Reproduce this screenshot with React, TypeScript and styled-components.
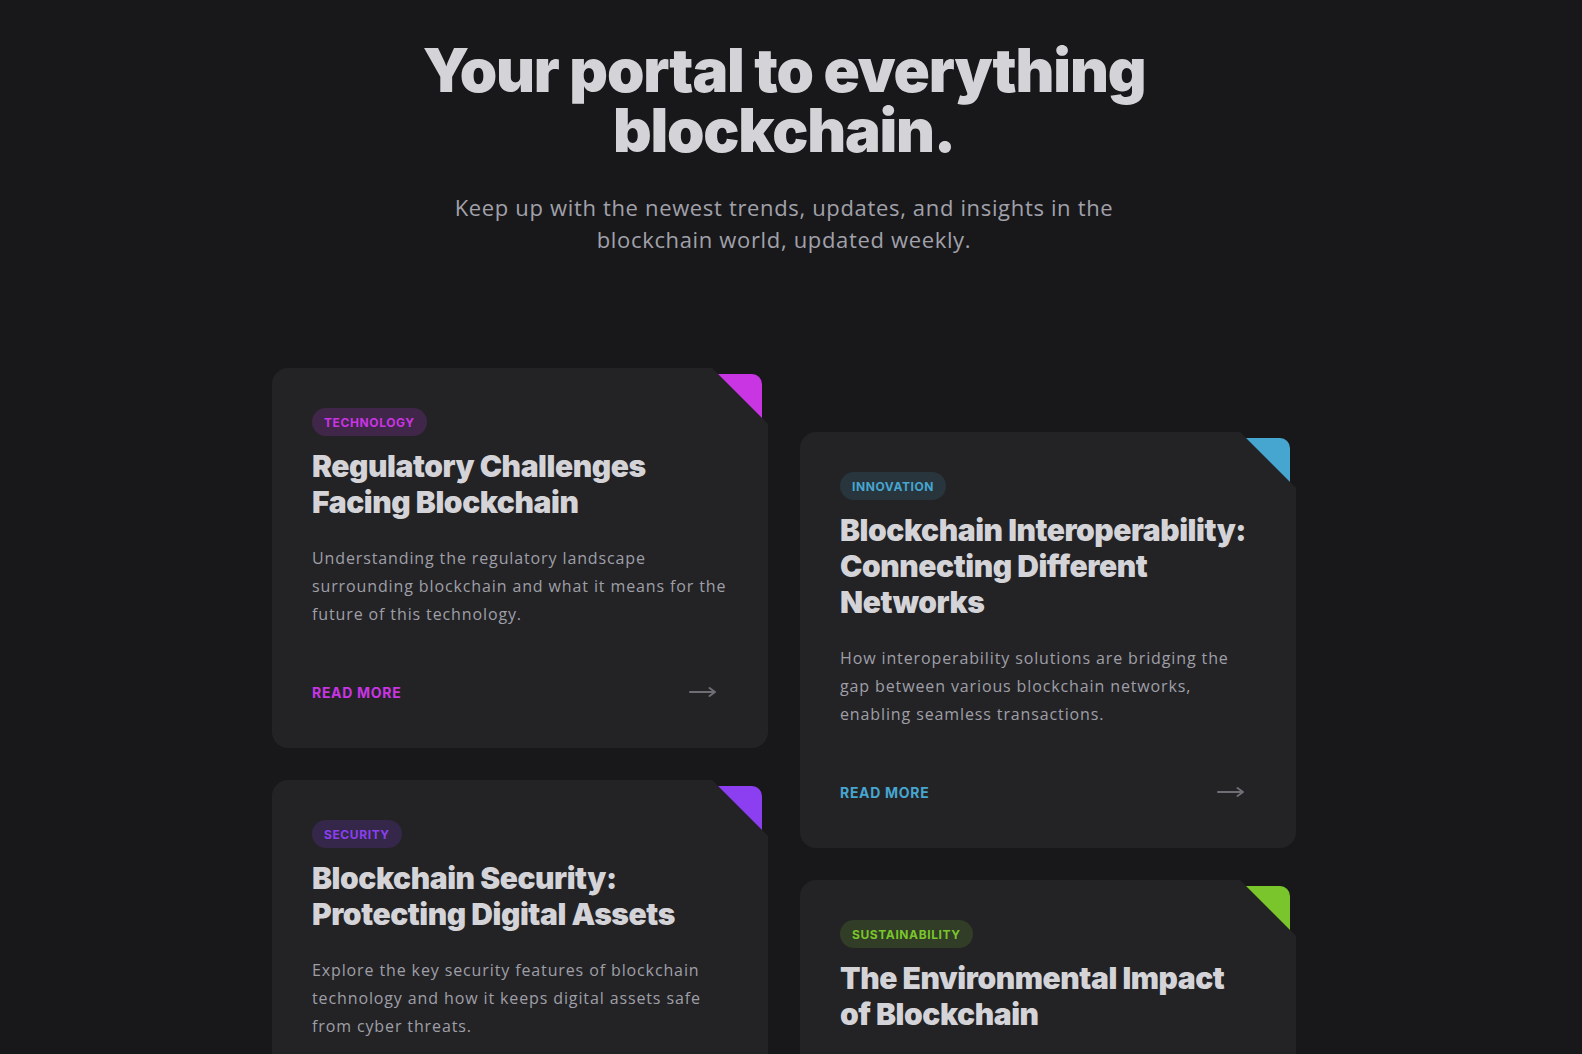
import React from "react";
import styled, { createGlobalStyle } from "styled-components";

const GlobalStyle = createGlobalStyle`
    html, body {
        margin: 0;
        padding: 0;
        background: #18181b;
    }
    * {
        box-sizing: border-box;
    }
`;

const Page = styled.main`
    min-height: 100vh;
    padding: 40px 14px 80px 0;
    display: flex;
    flex-direction: column;
    align-items: center;
`;

const Hero = styled.header`
    display: flex;
    flex-direction: column;
    align-items: center;
    text-align: center;
`;

const Title = styled.h1`
    margin: 0;
    max-width: 760px;
    font-family: Inter, "Liberation Sans", sans-serif;
    font-weight: 900;
    font-size: 60px;
    line-height: 60px;
    letter-spacing: -0.02em;
    color: #d4d4d8;
`;

const Subtitle = styled.p`
    margin: 31px 0 0;
    max-width: 700px;
    font-family: "Open Sans", "Liberation Sans", sans-serif;
    font-size: 22px;
    line-height: 32px;
    letter-spacing: 0.03em;
    color: #a1a1aa;
`;

const Grid = styled.section`
    margin-top: 113px;
    display: grid;
    grid-template-columns: 496px 496px;
    gap: 32px;
    align-items: start;
`;

type ColumnProps = {
    readonly offset?: boolean;
};

const Column = styled.div<ColumnProps>`
    display: flex;
    flex-direction: column;
    gap: 32px;
    padding-top: ${(props) => (props.offset ? "64px" : "0")};
`;

const CardWrap = styled.article`
    position: relative;
`;

const Card = styled.div`
    display: flex;
    flex-direction: column;
    padding: 40px 40px 43px;
    background: #232326;
    border-radius: 16px;
    clip-path: polygon(0 0, calc(100% - 56px) 0, 100% 56px, 100% 100%, 0 100%);
`;

type AccentProps = {
    readonly accent: string;
};

const Corner = styled.span<AccentProps>`
    position: absolute;
    top: 6px;
    right: 6px;
    width: 44px;
    height: 44px;
    background: ${(props) => props.accent};
    border-top-right-radius: 10px;
    clip-path: polygon(0 0, 100% 0, 100% 100%);
`;

const Tag = styled.span<AccentProps & { readonly tint: string }>`
    align-self: flex-start;
    height: 28px;
    padding: 0 12px;
    display: inline-flex;
    align-items: center;
    border-radius: 14px;
    background: ${(props) => props.tint};
    color: ${(props) => props.accent};
    font-family: Inter, "Liberation Sans", sans-serif;
    font-weight: 700;
    font-size: 12px;
    letter-spacing: 0.05em;
    text-transform: uppercase;
`;

const Heading = styled.h2`
    margin: 12px 0 0;
    font-family: Inter, "Liberation Sans", sans-serif;
    font-weight: 900;
    font-size: 30px;
    line-height: 36px;
    letter-spacing: -0.015em;
    color: #d4d4d8;
`;

const Description = styled.p`
    margin: 24px 0 0;
    font-family: "Open Sans", "Liberation Sans", sans-serif;
    font-size: 16px;
    line-height: 28px;
    letter-spacing: 0.055em;
    color: #9f9fa7;
`;

const Footer = styled.div`
    margin-top: 51px;
    height: 26px;
    padding-right: 11px;
    display: flex;
    align-items: center;
    justify-content: space-between;
`;

const ReadMore = styled.a<AccentProps>`
    font-family: Inter, "Liberation Sans", sans-serif;
    font-weight: 700;
    font-size: 14px;
    letter-spacing: 0.05em;
    text-transform: uppercase;
    text-decoration: none;
    color: ${(props) => props.accent};
`;

const Arrow = styled.svg`
    width: 28px;
    height: 14px;
    color: #6e6e75;
`;

type Post = {
    tag: string;
    accent: string;
    tint: string;
    title: string;
    text: string;
};

const left: Post[] = [
    {
        tag: "Technology",
        accent: "#c935e3",
        tint: "rgba(201, 53, 227, 0.18)",
        title: "Regulatory Challenges Facing Blockchain",
        text: "Understanding the regulatory landscape surrounding blockchain and what it means for the future of this technology.",
    },
    {
        tag: "Security",
        accent: "#8b3ff0",
        tint: "rgba(139, 63, 240, 0.18)",
        title: "Blockchain Security: Protecting Digital Assets",
        text: "Explore the key security features of blockchain technology and how it keeps digital assets safe from cyber threats.",
    },
];

const right: Post[] = [
    {
        tag: "Innovation",
        accent: "#46a6d0",
        tint: "rgba(70, 166, 208, 0.14)",
        title: "Blockchain Interoperability: Connecting Different Networks",
        text: "How interoperability solutions are bridging the gap between various blockchain networks, enabling seamless transactions.",
    },
    {
        tag: "Sustainability",
        accent: "#7ac52b",
        tint: "rgba(122, 197, 43, 0.16)",
        title: "The Environmental Impact of Blockchain",
        text: "A closer look at the energy use of blockchain networks and the shift toward greener consensus mechanisms.",
    },
];

const PostCard = function ({ post }: { post: Post }) {
    return (
        <CardWrap>
            <Card>
                <Tag accent={post.accent} tint={post.tint}>
                    {post.tag}
                </Tag>
                <Heading>{post.title}</Heading>
                <Description>{post.text}</Description>
                <Footer>
                    <ReadMore href="#" accent={post.accent}>
                        Read more
                    </ReadMore>
                    <Arrow viewBox="0 0 28 14" fill="none">
                        <path
                            d="M1 7H26M20.5 3L26 7L20.5 11"
                            stroke="currentColor"
                            strokeWidth="2"
                            strokeLinecap="round"
                            strokeLinejoin="round"
                        />
                    </Arrow>
                </Footer>
            </Card>
            <Corner accent={post.accent} />
        </CardWrap>
    );
};

const App = function () {
    return (
        <>
            <GlobalStyle />
            <Page>
                <Hero>
                    <Title>Your portal to everything blockchain.</Title>
                    <Subtitle>
                        Keep up with the newest trends, updates, and insights in the blockchain world,
                        updated weekly.
                    </Subtitle>
                </Hero>
                <Grid>
                    <Column>
                        {left.map((post) => (
                            <PostCard key={post.title} post={post} />
                        ))}
                    </Column>
                    <Column offset>
                        {right.map((post) => (
                            <PostCard key={post.title} post={post} />
                        ))}
                    </Column>
                </Grid>
            </Page>
        </>
    );
};

export default App;
